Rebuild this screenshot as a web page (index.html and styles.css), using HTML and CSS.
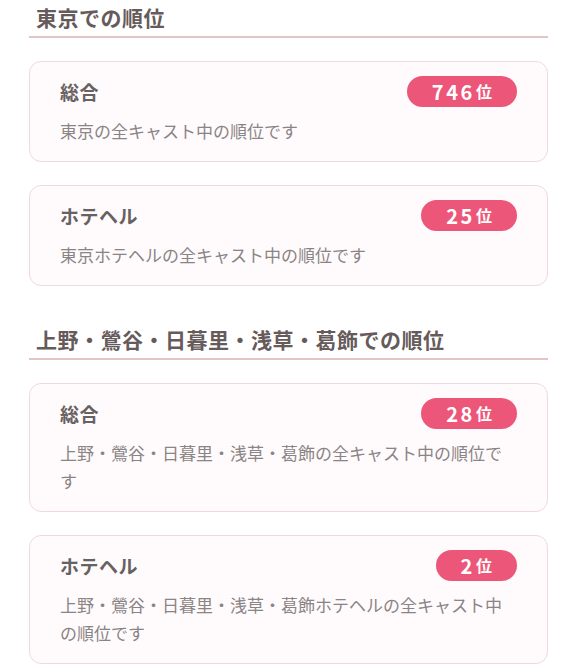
FILE: index.html
```html
<!DOCTYPE html>
<html lang="ja">
<head>
<meta charset="utf-8">
<link rel="stylesheet" href="styles.css">
</head>
<body>
<div class="page">
  <section class="section">
    <h2 class="section-title">東京での順位</h2>
    <div class="card">
      <div class="card-head">
        <span class="card-title">総合</span>
        <span class="badge"><span class="num">746</span><span class="unit">位</span></span>
      </div>
      <p class="card-desc">東京の全キャスト中の順位です</p>
    </div>
    <div class="card">
      <div class="card-head">
        <span class="card-title">ホテヘル</span>
        <span class="badge"><span class="num">25</span><span class="unit">位</span></span>
      </div>
      <p class="card-desc">東京ホテヘルの全キャスト中の順位です</p>
    </div>
  </section>
  <section class="section">
    <h2 class="section-title">上野・鶯谷・日暮里・浅草・葛飾での順位</h2>
    <div class="card">
      <div class="card-head">
        <span class="card-title">総合</span>
        <span class="badge"><span class="num">28</span><span class="unit">位</span></span>
      </div>
      <p class="card-desc">上野・鶯谷・日暮里・浅草・葛飾の全キャスト中の順位です</p>
    </div>
    <div class="card">
      <div class="card-head">
        <span class="card-title">ホテヘル</span>
        <span class="badge"><span class="num">2</span><span class="unit">位</span></span>
      </div>
      <p class="card-desc">上野・鶯谷・日暮里・浅草・葛飾ホテヘルの全キャスト中の順位です</p>
    </div>
  </section>
</div>
</body>
</html>
```
FILE: styles.css
```css
html, body {
  margin: 0;
  padding: 0;
  background: #ffffff;
}
body {
  font-family: "Noto Sans CJK JP", "Noto Sans", sans-serif;
}
.page {
  padding: 2px 28px 0 29px;
}
.section + .section {
  margin-top: 38px;
}
.section-title {
  margin: 0 0 23px;
  padding: 0 0 4px 7px;
  font-size: 21px;
  line-height: 30px;
  letter-spacing: 0.5px;
  font-weight: 700;
  color: #665a5a;
  border-bottom: 2px solid #e2c6c6;
}
.card {
  border: 1px solid #f2d9d9;
  border-radius: 12px;
  background: #fffbfd;
  padding: 14px 30px 16px 30px;
}
.card + .card {
  margin-top: 23px;
}
.card-head {
  display: flex;
  align-items: center;
  justify-content: space-between;
  height: 31px;
}
.card-title {
  font-size: 19px;
  font-weight: 700;
  color: #676161;
  letter-spacing: 0.5px;
}
.badge {
  display: flex;
  align-items: center;
  height: 31px;
  padding: 0 25px 0 25px;
  border-radius: 16px;
  background: #ec5679;
  color: #ffffff;
  font-weight: 700;
}
.num {
  font-size: 20px;
  letter-spacing: 2.6px;
  line-height: 31px;
}
.unit {
  font-size: 16px;
  line-height: 31px;
  margin-left: 1px;
}
.card-desc {
  margin: 10px 0 0;
  font-size: 17px;
  line-height: 28px;
  color: #8a8484;
}
```
